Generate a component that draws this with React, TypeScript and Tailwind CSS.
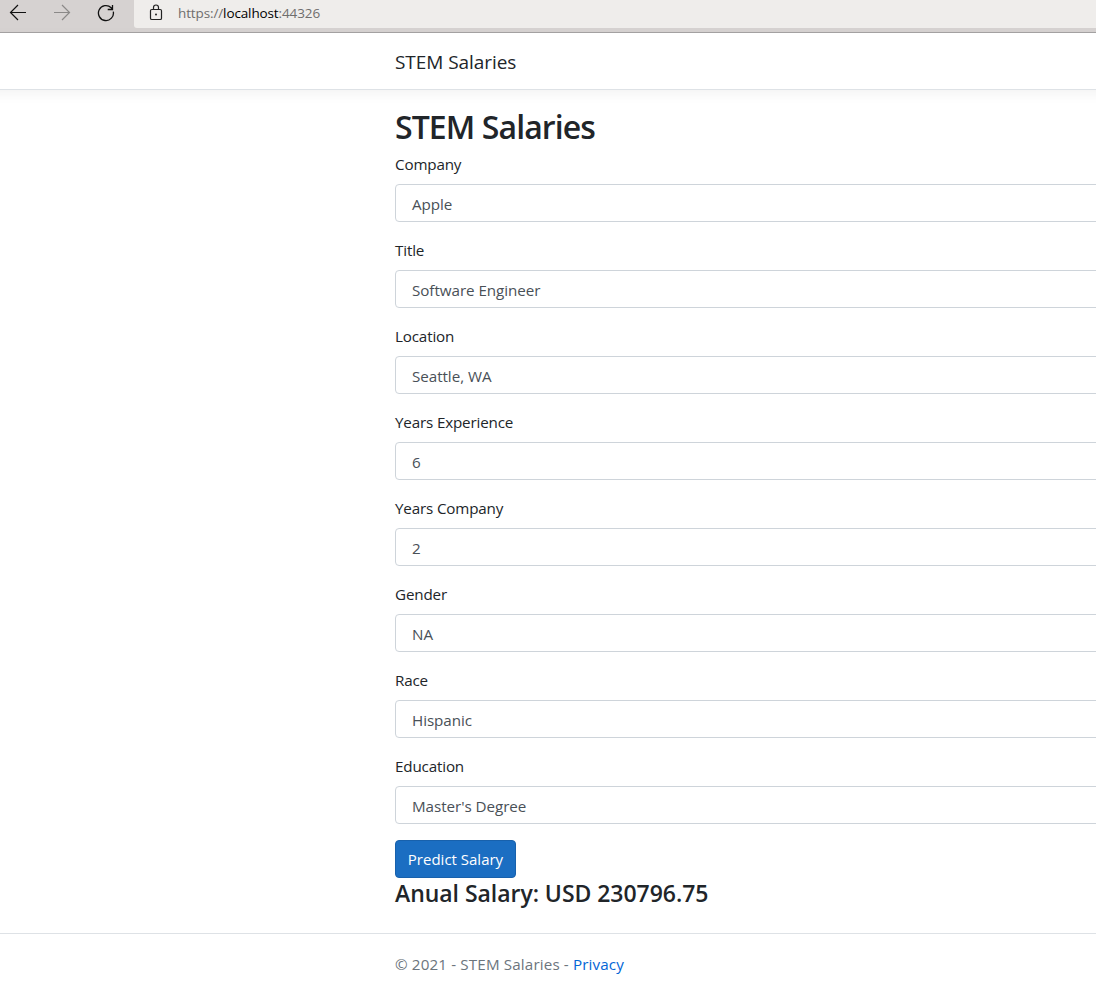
const fields = [
  { label: 'Company', value: 'Apple' },
  { label: 'Title', value: 'Software Engineer' },
  { label: 'Location', value: 'Seattle, WA' },
  { label: 'Years Experience', value: '6' },
  { label: 'Years Company', value: '2' },
  { label: 'Gender', value: 'NA' },
  { label: 'Race', value: 'Hispanic' },
  { label: 'Education', value: "Master's Degree" },
];

function BrowserBar() {
  return (
    <div className="flex h-[33px] shrink-0 items-start border-b border-[#a5a3a3] bg-[#d6d2d1]">
      <div className="flex h-[28px] w-[134px] shrink-0 items-start">
        <svg className="ml-[9px] mt-[4px] size-[18px] shrink-0" viewBox="0 0 18 18" fill="none" stroke="#111" strokeWidth="1.2">
          <path d="M17 8.5H1.5M9 1 1.5 8.5 9 16" />
        </svg>
        <svg className="ml-[26px] mt-[4px] size-[18px] shrink-0" viewBox="0 0 18 18" fill="none" stroke="#8b8988" strokeWidth="1.2">
          <path d="M1 8.5H16.500M9 1l7.500 7.500L9 16" />
        </svg>
        <svg className="ml-[26px] mt-[4px] size-[18px] shrink-0" viewBox="0 0 18 18" fill="none" stroke="#111" strokeWidth="1.3">
          <path d="M16.300 7.600A7.500 7.500 0 1 1 14.200 3.700L15.500 5.500M15.500 1V5.500H10.700" />
        </svg>
      </div>
      <div className="flex h-[28px] flex-1 items-start rounded-bl-[3px] bg-[#efedeb]">
        <svg className="ml-[15px] mt-[4px] h-[17px] w-[14px] shrink-0" viewBox="0 0 14 17" fill="none" stroke="#222" strokeWidth="1.2">
          <rect x="1.500" y="5.500" width="11" height="10" rx="1.300" />
          <path d="M4.500 5.500V3.500a2.500 2.500 0 0 1 5 0v2" />
          <circle cx="7" cy="10.500" r="1" fill="#222" stroke="none" />
        </svg>
        <span className="ml-[15px] mt-[3px] whitespace-pre text-[13.5px] leading-[20px] tracking-[-0.12px] text-[#6f6e6d]">
          https://<span className="text-black">localhost</span>:44326
        </span>
      </div>
    </div>
  );
}

export default function App() {
  return (
    <div className="flex h-[988px] w-full flex-col overflow-hidden bg-white font-['Open_Sans','Noto_Sans',sans-serif] text-[#212529]">
      <BrowserBar />
      <header className="-mx-[16px] flex h-[57px] shrink-0 items-center border-b border-[#dee2e6] pl-[411px] pt-[2px] shadow-[0_4px_12px_rgba(0,0,0,0.05)]">
        <span className="text-[19px] leading-[30px] tracking-[-0.06px]">STEM Salaries</span>
      </header>
      <main className="h-[843px] shrink-0 pl-[395px] pt-[16px]">
        <h1 className="mb-[8px] h-[38px] text-[32px] font-semibold leading-[41px] tracking-[-0.9px]">STEM Salaries</h1>
        {fields.map((f) => (
          <div key={f.label} className="mb-[16px]">
            <div className="mb-[8px] h-[24px] text-[15.2px] leading-[24px] tracking-[-0.16px]">{f.label}</div>
            <div className="mr-[-16px] h-[38px] rounded-[4px] border border-[#ced4da] pl-[16px] text-[15.2px] leading-[38px] tracking-[-0.05px] text-[#495057]">
              {f.value}
            </div>
          </div>
        ))}
        <button className="block h-[38px] w-[121px] rounded-[4px] border border-[#1861ac] bg-[#1b6ec2] text-[15px] leading-[36px] text-white">
          Predict Salary
        </button>
        <h3 className="text-[23px] font-semibold leading-[31px] tracking-[-0.04px]">Anual Salary: USD 230796.75</h3>
      </main>
      <footer className="h-[55px] shrink-0 border-t border-[#dee2e6] pl-[395px] text-[15.2px] leading-[60px] tracking-[0.14px] text-[#6c757d]">
        <span>© 2021 - STEM Salaries - </span>
        <a className="text-[#0366d6]">Privacy</a>
      </footer>
    </div>
  );
}
